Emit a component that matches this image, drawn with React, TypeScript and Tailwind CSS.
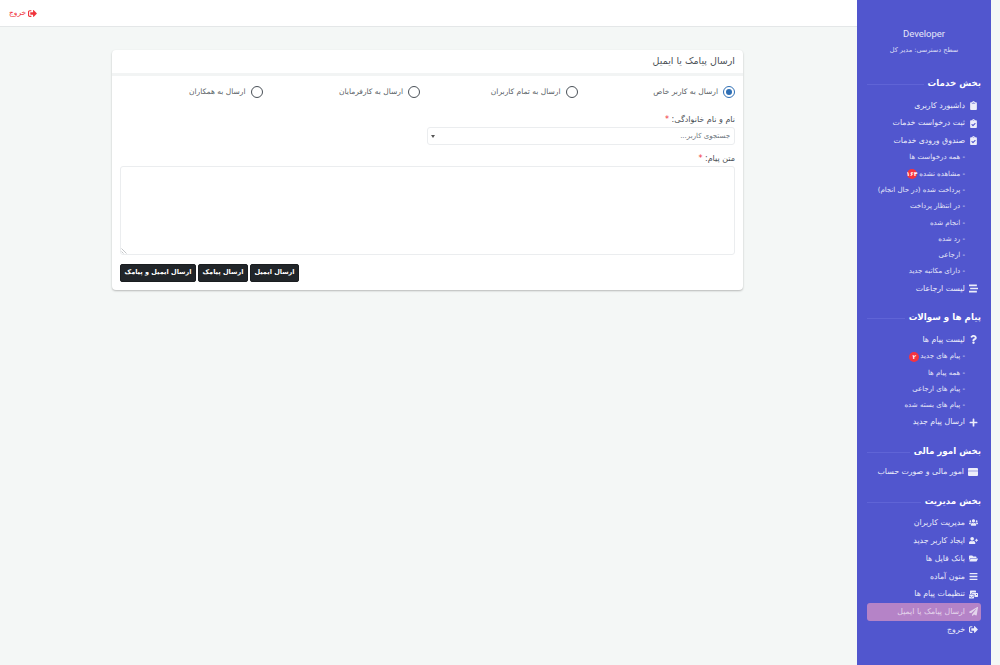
import React from 'react';
import {
  FaClipboard,
  FaClipboardCheck,
  FaStream,
  FaQuestion,
  FaPlus,
  FaUsers,
  FaUserPlus,
  FaFolderOpen,
  FaBars,
  FaMailBulk,
  FaPaperPlane,
  FaSignOutAlt,
} from 'react-icons/fa';

const font = "font-['DejaVu_Sans','Noto_Sans',sans-serif]";

const SectionTitle: React.FC<{ title: string; mt: string }> = ({ title, mt }) => (
  <div className={`flex items-center gap-1 px-[10px] h-[14px] ${mt}`}>
    <span className="text-[8.7px] leading-[14px] font-bold text-white whitespace-nowrap">{title}</span>
    <span className="flex-1 border-t border-[#5f64d6] mt-[2px]"></span>
  </div>
);

const NavItem: React.FC<{ icon: React.ReactNode; label: string; active?: boolean; h?: string }> = ({
  icon,
  label,
  active,
  h = 'h-[17.5px]',
}) => (
  <div className={`flex items-center gap-[4px] mx-[10px] px-[3px] rounded-[3px] ${h} ${active ? 'bg-[#b583c7] text-[#e4d5ec]' : 'text-[#ecedfa]'}`}>
    <span className="flex justify-center text-[9px]">{icon}</span>
    <span className="text-[7.8px] whitespace-nowrap">{label}</span>
  </div>
);

const SubItem: React.FC<{ label: string; badge?: React.ReactNode }> = ({ label, badge }) => (
  <div className="flex items-center h-[16.3px] pr-[26px] text-[7px] text-[#e6e7f8] whitespace-nowrap">
    <span>- {label}</span>
    {badge}
  </div>
);

const Badge: React.FC<{ value: string; mr: string }> = ({ value, mr }) => (
  <span className={`${mr} h-[10px] w-[10px] rounded-full bg-[#f5333f] text-white text-[6px] leading-[10px] text-center font-bold`}>
    {value}
  </span>
);

const Radio: React.FC<{ label: string; checked?: boolean }> = ({ label, checked }) => (
  <label className="flex items-center gap-[5px]">
    <span className={`w-[12px] h-[12px] rounded-full border-[1.5px] flex items-center justify-center ${checked ? 'border-[#2f6fb5]' : 'border-[#495057]'}`}>
      {checked && <span className="w-[6px] h-[6px] rounded-full bg-[#2f6fb5]"></span>}
    </span>
    <span className="text-[7.5px] text-[#5a5f66] whitespace-nowrap">{label}</span>
  </label>
);

const Btn: React.FC<{ label: string }> = ({ label }) => (
  <button className="h-[18px] px-[3.5px] rounded-[2px] bg-[#212529] border border-[#1a1d20] text-white text-[6.5px] font-bold whitespace-nowrap">
    {label}
  </button>
);

// white card with a thin band, as drawn next to the finance item
const CardIcon: React.FC = () => (
  <svg width="10" height="8" viewBox="0 0 10 8">
    <rect width="10" height="8" rx="1" fill="#eceefa" />
    <rect y="2.5" width="10" height="1" fill="#9fa2e2" />
  </svg>
);

const App: React.FC = () => {
  return (
    <div dir="rtl" className={`${font} flex w-[1000px] h-[665px] overflow-hidden bg-[#f4f7f6]`}>
      <div className="w-[9px] shrink-0 bg-[#f4f7f6]"></div>

      {/* Sidebar */}
      <aside className="w-[134px] shrink-0 h-full bg-[#5156ce] pt-[27px]">
        <div className="text-center font-['Roboto'] text-[9.5px] leading-[14px] text-[#e6e7f8]">Developer</div>
        <div className="text-center text-[6.5px] leading-[10px] mt-[4px] text-[#dcdef5]">سطح دسترسی: مدیر کل</div>

        <SectionTitle title="بخش خدمات" mt="mt-[21px]" />
        <div className="mt-[7px]">
          <NavItem icon={<FaClipboard />} label="داشبورد کاربری" />
          <NavItem icon={<FaClipboardCheck />} label="ثبت درخواست خدمات" />
          <NavItem icon={<FaClipboardCheck />} label="صندوق ورودی خدمات" />
          <SubItem label="همه درخواست ها" />
          <SubItem label="مشاهده نشده" badge={<Badge value="۱۶۴" mr="mr-[2px]" />} />
          <SubItem label="پرداخت شده (در حال انجام)" />
          <SubItem label="در انتظار پرداخت" />
          <SubItem label="انجام شده" />
          <SubItem label="رد شده" />
          <SubItem label="ارجاعی" />
          <SubItem label="دارای مکاتبه جدید" />
          <NavItem icon={<FaStream />} label="لیست ارجاعات" />
        </div>

        <SectionTitle title="پیام ها و سوالات" mt="mt-[13px]" />
        <div className="mt-[6.5px]">
          <NavItem icon={<FaQuestion />} label="لیست پیام ها" />
          <SubItem label="پیام های جدید" badge={<Badge value="۲" mr="mr-[1px]" />} />
          <SubItem label="همه پیام ها" />
          <SubItem label="پیام های ارجاعی" />
          <SubItem label="پیام های بسته شده" />
          <NavItem icon={<FaPlus />} label="ارسال پیام جدید" />
        </div>

        <SectionTitle title="بخش امور مالی" mt="mt-[13px]" />
        <div className="mt-[5.5px]">
          <NavItem icon={<CardIcon />} label="امور مالی و صورت حساب" />
        </div>

        <SectionTitle title="بخش مدیریت" mt="mt-[13px]" />
        <div className="mt-[6px]">
          <NavItem h="h-[17.8px]" icon={<FaUsers />} label="مدیریت کاربران" />
          <NavItem h="h-[17.8px]" icon={<FaUserPlus />} label="ایجاد کاربر جدید" />
          <NavItem h="h-[17.8px]" icon={<FaFolderOpen />} label="بانک فایل ها" />
          <NavItem h="h-[17.8px]" icon={<FaBars />} label="متون آماده" />
          <NavItem h="h-[17.8px]" icon={<FaMailBulk />} label="تنظیمات پیام ها" />
          <NavItem h="h-[17.8px]" icon={<FaPaperPlane />} label="ارسال پیامک یا ایمیل" active />
          <NavItem h="h-[17.8px]" icon={<FaSignOutAlt />} label="خروج" />
        </div>
      </aside>

      {/* Main */}
      <main className="flex-1 min-w-0">
        <header className="h-[27px] bg-white border-b border-[#e4e7e8] flex items-center justify-end pl-[9px]">
          <span className="flex items-center gap-[2px] text-[7.5px] text-[#f0343c]">
            <FaSignOutAlt className="text-[9px]" />
            خروج
          </span>
        </header>

        <section className="mt-[23px] mr-[114px] w-[631px] h-[240px] bg-white rounded-[4px] shadow-[0_1px_2px_rgba(0,0,0,0.25)]">
          <div className="h-[26px] border-b-[3px] border-[#f2f4f4] px-[8px] flex items-center">
            <h2 className="text-[9.5px] text-[#4a4f55] font-normal">ارسال پیامک یا ایمیل</h2>
          </div>

          <div className="grid grid-cols-4 w-[638px] pr-[8px] mt-[9.5px]">
            <Radio label="ارسال به کاربر خاص" checked />
            <Radio label="ارسال به تمام کاربران" />
            <Radio label="ارسال به کارفرمایان" />
            <Radio label="ارسال به همکاران" />
          </div>

          <div className="px-[8px]">
            <div className="mt-[16px] text-[8px] leading-[12px] text-[#4a4f55]">
              نام و نام خانوادگی: <span className="text-[#f0343c]">*</span>
            </div>
            <div className="mt-[1.5px] w-[308px] h-[18px] border border-[#ebedef] rounded-[3px] flex items-center justify-between px-[3px]">
              <span className="text-[7px] text-[#6c757d] pr-[1px]">جستجوی کاربر...</span>
              <span className="w-0 h-0 border-x-[2px] border-x-transparent border-t-[3px] border-t-[#555]"></span>
            </div>

            <div className="mt-[8px] text-[8px] leading-[12px] text-[#4a4f55]">
              متن پیام: <span className="text-[#f0343c]">*</span>
            </div>
            <div className="relative mt-[1px] w-[615px]">
              <textarea className="block w-[615px] h-[89px] border border-[#ebedef] rounded-[3px] bg-white resize-none"></textarea>
              <svg className="absolute left-[1px] bottom-[1px]" width="6" height="6" viewBox="0 0 6 6">
                <path d="M0.5 0.5L5.5 5.5M0.5 3.5L2.5 5.5" stroke="#b5b8bb" strokeWidth="0.8" fill="none" />
              </svg>
            </div>

            <div className="mt-[9px] flex justify-end gap-[2px]">
              <Btn label="ارسال ایمیل" />
              <Btn label="ارسال پیامک" />
              <Btn label="ارسال ایمیل و پیامک" />
            </div>
          </div>
        </section>
      </main>
    </div>
  );
};

export default App;
